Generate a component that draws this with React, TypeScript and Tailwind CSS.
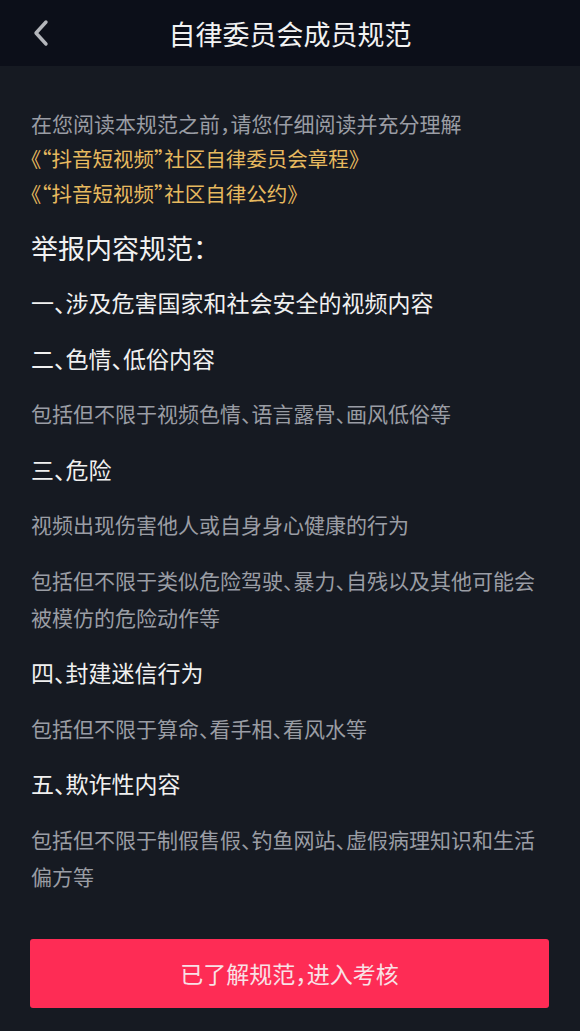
import React from 'react';

const sections = [
  { title: '一、涉及危害国家和社会安全的视频内容', notes: [] as string[] },
  { title: '二、色情、低俗内容', notes: ['包括但不限于视频色情、语言露骨、画风低俗等'] },
  {
    title: '三、危险',
    notes: ['视频出现伤害他人或自身身心健康的行为', '包括但不限于类似危险驾驶、暴力、自残以及其他可能会被模仿的危险动作等'],
  },
  { title: '四、封建迷信行为', notes: ['包括但不限于算命、看手相、看风水等'] },
  { title: '五、欺诈性内容', notes: ['包括但不限于制假售假、钓鱼网站、虚假病理知识和生活偏方等'] },
];

export default function App() {
  return (
    <div
      className="min-h-screen w-[580px] bg-[#161a22] flex flex-col [font-feature-settings:'halt']"
      style={{ fontFamily: '"Noto Sans CJK SC", "Noto Sans", sans-serif' }}
    >
      {/* Top bar */}
      <header className="h-[66px] bg-[#0c0f19] grid grid-cols-[1fr_auto_1fr] items-center">
        <div className="pl-[32px] flex items-center">
          <svg width="18" height="28" viewBox="0 0 18 28" fill="none">
            <path d="M14 3 L4 14 L14 25" stroke="#b4b6bb" strokeWidth="3.4" strokeLinecap="round" strokeLinejoin="round" />
          </svg>
        </div>
        <h1 className="text-[27px] text-[#f2f2f2] leading-none">自律委员会成员规范</h1>
        <div />
      </header>

      {/* Content */}
      <main className="flex-1 pl-[31px] pr-[28px] pt-[40px]">
        <div className="text-[21px] leading-[35px]">
          <p className="text-[#9a9da4]">在您阅读本规范之前，请您仔细阅读并充分理解</p>
          <p className="text-[#e6b95f] text-[20.5px]">《“抖音短视频”社区自律委员会章程》</p>
          <p className="text-[#e6b95f] text-[20.5px]">《“抖音短视频”社区自律公约》</p>
        </div>

        <h2 className="mt-[16.5px] text-[27px] leading-[40px] text-[#f2f2f2]">举报内容规范：</h2>

        <div className="mt-[16.5px] flex flex-col gap-[18.5px]">
          {sections.map((s) => (
            <React.Fragment key={s.title}>
              <h3 className="text-[23px] leading-[37px] text-[#f0f0f0]">{s.title}</h3>
              {s.notes.map((n) => (
                <p key={n} className="text-[21px] leading-[37px] text-[#9a9da4]">
                  {n}
                </p>
              ))}
            </React.Fragment>
          ))}
        </div>
      </main>

      {/* Bottom action */}
      <div className="px-[30px] pb-[23px]">
        <button className="w-[519px] h-[69px] rounded-[3px] bg-[#fe2c55] text-[23px] text-[#f8e1e6] flex items-center justify-center">
          已了解规范，进入考核
        </button>
      </div>
    </div>
  );
}
